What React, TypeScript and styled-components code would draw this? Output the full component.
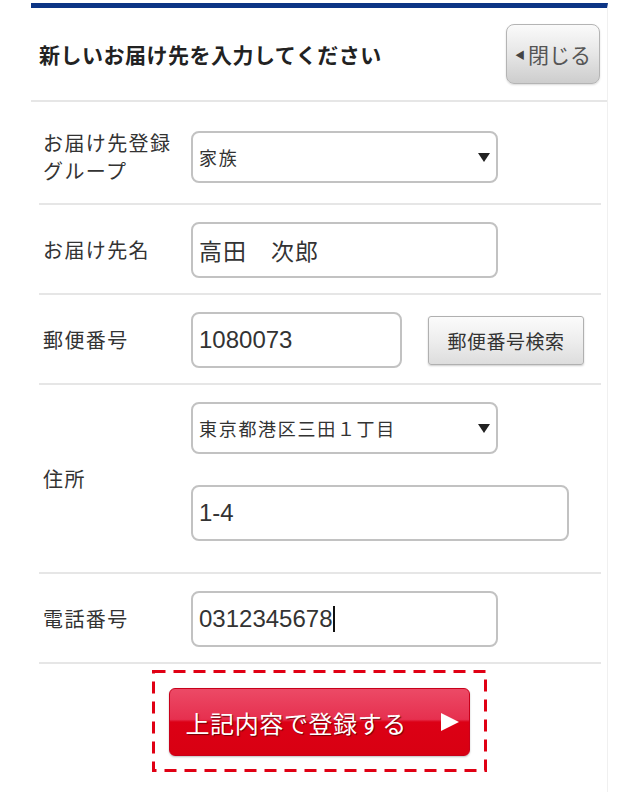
import styled, { createGlobalStyle } from "styled-components";

const GlobalStyle = createGlobalStyle`
  html, body {
    margin: 0;
    padding: 0;
    background: #ffffff;
  }
  body {
    font-family: "Noto Sans CJK JP", "Liberation Sans", sans-serif;
    color: #333333;
  }
`;

const Page = styled.div`
  width: 640px;
  height: 792px;
  padding: 3px 32px 0 31px;
  box-sizing: border-box;
  background: #ffffff;
`;

const Panel = styled.div`
  border-right: 1px solid #f0f0f0;
  border-top: 5px solid #0c3585;
  min-height: 789px;
  box-sizing: border-box;
`;

const Header = styled.div`
  display: flex;
  align-items: center;
  justify-content: space-between;
  height: 92px;
  padding: 0 7px 0 8px;
  border-bottom: 2px solid #e6e6e6;
`;

const Title = styled.h1`
  margin: 0;
  font-size: 21px;
  font-weight: 700;
  color: #222222;
  letter-spacing: 0.5px;
`;

const CloseButton = styled.button`
  display: flex;
  align-items: center;
  gap: 3px;
  width: 94px;
  height: 60px;
  padding: 0 0 0 8px;
  border: 1px solid #b4b4b4;
  border-radius: 8px;
  background: linear-gradient(#fafafa, #e6e6e6 50%, #cdcdcd);
  box-shadow: 0 1px 2px rgba(0, 0, 0, 0.15);
  font-family: inherit;
  font-size: 21px;
  color: #555555;
  cursor: pointer;
`;

const SmallArrow = styled.span`
  font-size: 10px;
  color: #444444;
`;

const Form = styled.div`
  margin: 0 6px 0 8px;
`;

const Row = styled.div<{ $pt?: number; $pb?: number }>`
  display: grid;
  grid-template-columns: 148px 1fr;
  align-items: center;
  padding: ${(p) => p.$pt ?? 17}px 0 ${(p) => p.$pb ?? 15}px 4px;
  border-bottom: 2px solid #e6e6e6;
`;

const Label = styled.div`
  font-size: 20px;
  line-height: 28px;
  letter-spacing: 1.4px;
  color: #333333;
`;

const FieldLine = styled.div`
  display: flex;
  align-items: center;
`;

const FieldStack = styled.div`
  display: flex;
  flex-direction: column;
  gap: 31px;
  padding-bottom: 15px;
`;

const TextBox = styled.div<{ $width: number }>`
  display: flex;
  align-items: center;
  width: ${(p) => p.$width}px;
  height: 56px;
  padding: 0 6px;
  box-sizing: border-box;
  border: 2px solid #c2c2c2;
  border-radius: 8px;
  background: #ffffff;
  font-family: "Liberation Sans", "Noto Sans CJK JP", sans-serif;
  font-size: 24px;
  color: #333333;
`;

const CjkValue = styled.span`
  font-family: "Noto Sans CJK JP", sans-serif;
  font-size: 23px;
  letter-spacing: 1px;
`;

const Caret = styled.span`
  display: inline-block;
  width: 1.5px;
  height: 26px;
  margin-left: 1px;
  background: #111111;
`;

const SelectBox = styled.div`
  display: flex;
  align-items: center;
  justify-content: space-between;
  width: 307px;
  height: 52px;
  padding: 0 6px 0 6px;
  box-sizing: border-box;
  border: 2px solid #c2c2c2;
  border-radius: 8px;
  background: #ffffff;
  font-size: 18px;
  letter-spacing: 1.7px;
  color: #333333;
`;

const DownArrow = styled.span`
  width: 0;
  height: 0;
  border-left: 6px solid transparent;
  border-right: 6px solid transparent;
  border-top: 9px solid #222222;
`;

const SearchButton = styled.button`
  width: 156px;
  height: 49px;
  margin-left: 26px;
  border: 1px solid #b0b0b0;
  border-radius: 3px;
  background: linear-gradient(#fbfbfb, #ececec 55%, #dddddd);
  box-shadow: 0 1px 2px rgba(0, 0, 0, 0.2);
  font-family: inherit;
  font-size: 19px;
  letter-spacing: 0.5px;
  color: #333333;
  cursor: pointer;
`;

const SubmitArea = styled.div`
  display: flex;
  justify-content: center;
  padding-top: 6px;
`;

const DashedFrame = styled.div`
  position: relative;
  padding: 18px 17px 16px 17px;
`;

const DashedOutline = styled.svg`
  position: absolute;
  inset: 0;
  width: 100%;
  height: 100%;
  pointer-events: none;
`;

const SubmitButton = styled.button`
  display: flex;
  align-items: center;
  justify-content: space-between;
  width: 301px;
  height: 68px;
  padding: 0 10px 0 16px;
  border: 1px solid #c8001a;
  border-radius: 6px;
  background: linear-gradient(#ec4a66 0%, #e6304f 46%, #dc0015 50%, #d80012 100%);
  box-shadow: 0 1px 2px rgba(0, 0, 0, 0.25);
  font-family: inherit;
  font-size: 24px;
  color: #ffffff;
  text-shadow: 1px 1px 1px rgba(90, 0, 0, 0.8);
  letter-spacing: 0.6px;
  cursor: pointer;
`;

const PlayArrow = styled.span`
  width: 0;
  height: 0;
  border-top: 9px solid transparent;
  border-bottom: 9px solid transparent;
  border-left: 18px solid #ffffff;
`;

export default function App() {
  return (
    <>
      <GlobalStyle />
      <Page>
        <Panel>
          <Header>
            <Title>新しいお届け先を入力してください</Title>
            <CloseButton>
              <SmallArrow>◀</SmallArrow>閉じる
            </CloseButton>
          </Header>
          <Form>
            <Row $pt={27} $pb={18}>
              <Label>
                お届け先登録
                <br />
                グループ
              </Label>
              <SelectBox>
                家族
                <DownArrow />
              </SelectBox>
            </Row>
            <Row>
              <Label>お届け先名</Label>
              <TextBox $width={307}>
                <CjkValue>高田　次郎</CjkValue>
              </TextBox>
            </Row>
            <Row>
              <Label>郵便番号</Label>
              <FieldLine>
                <TextBox $width={211}>1080073</TextBox>
                <SearchButton>郵便番号検索</SearchButton>
              </FieldLine>
            </Row>
            <Row $pb={16}>
              <Label>住所</Label>
              <FieldStack>
                <SelectBox>
                  東京都港区三田１丁目
                  <DownArrow />
                </SelectBox>
                <TextBox $width={378}>1-4</TextBox>
              </FieldStack>
            </Row>
            <Row>
              <Label>電話番号</Label>
              <TextBox $width={307}>
                0312345678
                <Caret />
              </TextBox>
            </Row>
          </Form>
          <SubmitArea>
            <DashedFrame>
              <DashedOutline>
                <rect
                  x="1.5"
                  y="1.5"
                  width="calc(100% - 3px)"
                  height="calc(100% - 3px)"
                  fill="none"
                  stroke="#e00014"
                  strokeWidth="3"
                  strokeDasharray="12 8"
                />
              </DashedOutline>
              <SubmitButton>
                上記内容で登録する
                <PlayArrow />
              </SubmitButton>
            </DashedFrame>
          </SubmitArea>
        </Panel>
      </Page>
    </>
  );
}
